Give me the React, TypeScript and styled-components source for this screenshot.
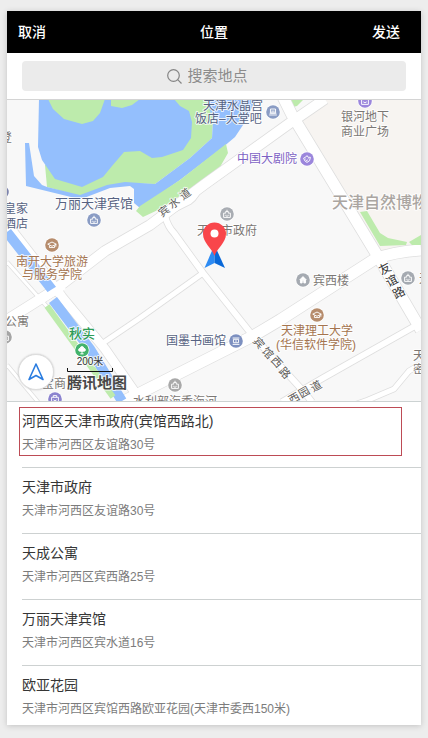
import React from 'react';
import styled, { createGlobalStyle } from 'styled-components';

const GlobalStyle = createGlobalStyle`
  * {
    box-sizing: border-box;
  }
  body {
    margin: 0;
    background: #ededed;
    font-family: "Liberation Sans", "Noto Sans CJK SC", sans-serif;
  }
  button,
  input {
    font-family: inherit;
  }
`;

const Screen = styled.main`
  margin: 11px 7px 13px;
  background: #fff;
  box-shadow: 0 1px 6px rgba(0, 0, 0, 0.18);
`;

const TopBar = styled.header`
  display: grid;
  grid-template-columns: 1fr auto 1fr;
  align-items: center;
  height: 42px;
  padding: 0 21px 0 11px;
  background: #000;
`;

const BarButton = styled.button<{ $end?: boolean }>`
  justify-self: ${(p) => (p.$end ? 'end' : 'start')};
  padding: 0;
  border: 0;
  background: none;
  color: #fff;
  font-size: 14px;
  line-height: 20px;
  font-weight: 500;
`;

const Title = styled.h1`
  margin: 0 0 0 10px;
  color: #fff;
  font-size: 14px;
  line-height: 20px;
  font-weight: 500;
`;

const SearchBar = styled.form`
  padding: 8px 15px;
  border-bottom: 1px solid #d4d4d4;
`;

const SearchField = styled.label`
  display: flex;
  align-items: center;
  justify-content: center;
  gap: 6px;
  height: 30px;
  border-radius: 4px;
  background: #ebebeb;
`;

const SearchInput = styled.input`
  width: 74px;
  padding: 0;
  border: 0;
  outline: 0;
  background: transparent;
  color: #444;
  font-size: 15px;
  line-height: 22px;
  &::placeholder {
    color: #8c8c8c;
    opacity: 1;
  }
`;

const MapPane = styled.section`
  position: relative;
  height: 302px;
  border-bottom: 1px solid #ccd2d2;
  overflow: hidden;
`;

const MapCanvas = styled.svg`
  display: block;
  width: 100%;
  height: 100%;
`;

const MapText = styled.text<{ $size?: number; $weight?: number }>`
  font-size: ${(p) => p.$size ?? 12}px;
  font-weight: ${(p) => p.$weight ?? 400};
  paint-order: stroke;
  stroke: rgba(255, 255, 255, 0.8);
  stroke-width: 2px;
  stroke-linejoin: round;
`;

const LocateButton = styled.button`
  position: absolute;
  left: 11px;
  bottom: 11px;
  display: flex;
  align-items: center;
  justify-content: center;
  width: 36px;
  height: 36px;
  padding: 0;
  border: 1px solid #ddd;
  border-radius: 50%;
  background: #fff;
  box-shadow: 0 0 2px rgba(0, 0, 0, 0.2);
`;

const PlaceList = styled.ul`
  margin: 0;
  padding: 0 0 0 15px;
  list-style: none;
`;

const PlaceButton = styled.button`
  display: flex;
  flex-direction: column;
  gap: 3px;
  width: 100%;
  padding: 8px 15px 12px 0;
  border: 0;
  background: none;
  text-align: left;
`;

const PlaceItem = styled.li<{ $selected?: boolean }>`
  position: relative;
  border-bottom: 1px solid #cdd1d1;
  &:last-child {
    border-bottom: 0;
  }
  &:last-child ${PlaceButton} {
    padding-bottom: 6px;
  }
  &::after {
    content: '';
    display: ${(p) => (p.$selected ? 'block' : 'none')};
    position: absolute;
    inset: 5px 19px 11px -3px;
    border: 1px solid #bd4b55;
    pointer-events: none;
  }
`;

const PlaceName = styled.span`
  color: #363636;
  font-size: 14px;
  line-height: 22px;
`;

const PlaceAddress = styled.span`
  color: #7c7c7c;
  font-size: 12px;
  line-height: 20px;
`;

type Glyph = 'tower' | 'bed' | 'home' | 'cap' | 'bag' | 'tree' | 'mask' | 'frame';

const glyphs: Record<Glyph, React.ReactNode> = {
  tower: <path d="M-4 4V-1h2.500V-3h3v2H4v5ZM0-5v2M-2 1v1M0 1v3M2 1v1" />,
  bed: <path d="M-3-3.500h6V1h-6ZM-4.500 3.500h9M-2-1h4M-4 1.500h8" />,
  home: <path d="M-4 0 0-4 4 0M-3-.5V3.500h2V1h2v2.500h2V-.5Z" fill="#fff" />,
  cap: <path d="M-5-1 0-3.500 5-1 0 1.500ZM-3 .5V3h6V.5M4.500-1v3" />,
  bag: <path d="M-4-2h8v6h-8ZM-2-2v-2h4v2M-2 1q2 2 4 0" />,
  tree: <path d="M-4 0q0-2 2-2 0-2 2-2t2 2q2 0 2 2 0 1.500-2 1.500h-4Q-4 1.500-4 0M0 1v4M-2 4.500h4" fill="#fff" />,
  mask: <path d="M-4-1q3-1 4-3 1 3 4 2Q4 3 0 4-3 3-4-1M-2 0h1M1-1h1M-1 2 1 1" />,
  frame: <path d="M-4-3.500h8M-3-2h6v4h-6ZM-4 4h8M-1 0h2" />,
};

function Poi({ x, y, color, glyph }: { x: number; y: number; color: string; glyph: Glyph }) {
  return (
    <g transform={`translate(${x} ${y})`}>
      <circle r="7.500" fill="#fff" />
      <circle r="6.800" fill={color} />
      <g fill="none" stroke="#fff" strokeWidth="1.100" transform="scale(.85)">
        {glyphs[glyph]}
      </g>
    </g>
  );
}

const roads = [
  { d: 'M7 365 38 402', w: 3 },
  { d: 'M7 262 50 310', w: 3 },
  { d: 'M103 343 140 318 203 273', w: 5 },
  { d: 'M165 216Q168 227 174 233L203 273 253 336 305 393 312 402', w: 6 },
  { d: 'M166 214 190 202Q198 196 201 184', w: 4 },
  { d: 'M282 402 323 378 415 326', w: 6 },
  { d: 'M354 405 368 400 394 389 409 371 421 364', w: 5 },
  { d: 'M7 320 53 291 105 251 150 225 205 184 290 123 325 99', w: 10 },
  { d: 'M118 404 140 393 253 336 280 320 375 259Q393 252 421 250', w: 11 },
  { d: 'M283 97 292 115 377 255 421 330', w: 11 },
  { d: 'M7 224 35 260 62 297 105 349 143 404', w: 9 },
];

const BLUE = '#94bffd';
const GREEN = '#bdebac';

function CityMap() {
  return (
    <MapCanvas viewBox="7 100 414 301" preserveAspectRatio="xMidYMid slice" role="img" aria-label="地图">
      <path d="M7 99h414v303H7Z" fill="#f8f8f8" />
      <path d="M292 115 325 97h96v150l-42 5Z" fill="#f7f4f1" />

      <path
        d="M45 165 104 150 174 99H207L213 120 212 138 190 158 155 184 125 183 107 186 80 196 47 187Z"
        fill={GREEN}
      />
      <path
        d="M39 99 38 147 42 160 55 179 82 187 103 177 112 166 124 152 140 151 152 158 162 157 183 150 191 138 192 122 189 111 180 106 174 99Z"
        fill={BLUE}
      />
      <path
        d="M25 143H29L34 176 42 185 47 187 80 195 107 185 125 182 140 183 155 184 190 158 212 138 213 120 206 99H256L245 122 235 137 222 148 180 180 140 208 134 203V189L130 186 110 188 84 198 75 198 26 186Z"
        fill={BLUE}
      />
      <path d="M140 206 180 180 226 144 228 153 220 167 200 183 160 209 143 217 136 211Z" fill={GREEN} />
      <path d="M48 99 53 109 64 119 82 124 93 121 100 113 105 99ZM111 99V106L122 108 132 105 140 99Z" fill={GREEN} />
      <path d="M289 99H304L297 106 293 107Z" fill={GREEN} />

      <g fill="none" strokeLinejoin="round">
        {roads.map((r) => (
          <path key={r.d} d={r.d} stroke="#dedede" strokeWidth={r.w + 1.5} />
        ))}
        {roads.map((r) => (
          <path key={r.d} d={r.d} stroke="#fff" strokeWidth={r.w} />
        ))}
      </g>

      <path d="M7 232 53 291M53 300 90 349 122 401" stroke={BLUE} strokeWidth="10" fill="none" />
      <path d="M43 299 64 286" stroke="#fff" strokeWidth="7" />
      <path d="M47 306 113 397" stroke={GREEN} strokeWidth="6" fill="none" />
      <path d="M360 212 367 211 380 233 388 238 407 242 406 245 380 246ZM409 242 421 235V245H412Z" fill={GREEN} />

      <Poi x={273} y={112} color="#8a9cc4" glyph="bed" />
      <Poi x={365} y={101} color="#9b86dc" glyph="bag" />
      <Poi x={307} y={159} color="#9b86dc" glyph="mask" />
      <Poi x={94} y={220} color="#8a9cc4" glyph="tower" />
      <Poi x={227} y={214} color="#a9adb3" glyph="tower" />
      <Poi x={52} y={245} color="#b68c6c" glyph="cap" />
      <Poi x={303} y={280} color="#a5aab1" glyph="home" />
      <Poi x={408} y={278} color="#a5aab1" glyph="tower" />
      <Poi x={317} y={315} color="#b68c6c" glyph="cap" />
      <Poi x={236} y={341} color="#7d90c0" glyph="frame" />
      <Poi x={175} y={385} color="#a9a9a9" glyph="tower" />
      <Poi x={82} y={350} color="#43b36c" glyph="tree" />
      <Poi x={55} y={399} color="#8b83cf" glyph="bag" />
      <Poi x={2} y={192} color="#7d84ad" glyph="frame" />
      <Poi x={5} y={337} color="#a5a5a5" glyph="tower" />

      <g fill="#566282">
        <MapText x={203} y={110}>天津水晶宫</MapText>
        <MapText x={195} y={123}>饭店–大堂吧</MapText>
        <MapText x={55} y={208} $size={13}>万丽天津宾馆</MapText>
        <MapText x={4} y={213}>皇家</MapText>
        <MapText x={4} y={228}>酒店</MapText>
        <MapText x={166} y={345}>国墨书画馆</MapText>
      </g>
      <g fill="#7d62c4">
        <MapText x={237} y={163}>中国大剧院</MapText>
      </g>
      <g fill="#7b7774">
        <MapText x={0} y={142}>登</MapText>
        <MapText x={341} y={121}>银河地下</MapText>
        <MapText x={341} y={136}>商业广场</MapText>
        <MapText x={197} y={235}>天津市政府</MapText>
        <MapText x={313} y={285}>宾西楼</MapText>
        <MapText x={419} y={283}>天</MapText>
        <MapText x={5} y={326}>公寓</MapText>
        <MapText x={42} y={388}>宝商</MapText>
        <MapText x={133} y={406}>水利部海委海河</MapText>
        <MapText x={413} y={360}>天</MapText>
        <MapText x={413} y={374}>密</MapText>
      </g>
      <g fill="#aaa5a1">
        <MapText x={332} y={208} $size={16} $weight={500}>天津自然博物</MapText>
      </g>
      <g fill="#a4744f">
        <MapText x={16} y={266}>南开大学旅游</MapText>
        <MapText x={22} y={279}>与服务学院</MapText>
        <MapText x={281} y={335}>天津理工大学</MapText>
        <MapText x={276} y={349}>(华信软件学院)</MapText>
      </g>
      <g fill="#2f9c56">
        <MapText x={69} y={338} $size={13} $weight={500}>秋实</MapText>
      </g>
      <g fill="#5d5b58" textAnchor="middle">
        <MapText transform="translate(164 211) rotate(-37)" y={4} $size={11}>宾</MapText>
        <MapText transform="translate(174 203) rotate(-37)" y={4} $size={11}>水</MapText>
        <MapText transform="translate(185 194) rotate(-37)" y={4} $size={11}>道</MapText>
        <MapText transform="translate(259 343) rotate(48)" y={4} $size={11}>宾</MapText>
        <MapText transform="translate(268 353) rotate(48)" y={4} $size={11}>馆</MapText>
        <MapText transform="translate(277 362) rotate(48)" y={4} $size={11}>西</MapText>
        <MapText transform="translate(285 373) rotate(48)" y={4} $size={11}>路</MapText>
        <MapText transform="translate(294 398) rotate(-30)" y={4} $size={11}>西</MapText>
        <MapText transform="translate(304 392) rotate(-30)" y={4} $size={11}>园</MapText>
        <MapText transform="translate(316 386) rotate(-30)" y={4} $size={11}>道</MapText>
      </g>
      <g fill="#333" textAnchor="middle">
        <MapText transform="translate(385 269) rotate(-28)" y={4}>友</MapText>
        <MapText transform="translate(392 281) rotate(-28)" y={4}>谊</MapText>
        <MapText transform="translate(399 293) rotate(-28)" y={4}>路</MapText>
      </g>

      <path d="M214.500 245 204.500 268 214.500 263Z" fill="#2d8bf3" />
      <path d="M214.500 245 225 268 214.500 263Z" fill="#0968d8" />
      <path d="M214.500 256C212 248 203 243 203 234a11.500 11.500 0 0 1 23 0c0 9-9 14-11.500 22Z" fill="#f9464b" />
      <circle cx="214.500" cy="233.500" r="4" fill="#fff" />

      <g fill="#333" textAnchor="middle">
        <MapText x={90} y={365} $size={10}>200米</MapText>
      </g>
      <path d="M67.500 368v3.500h45V368" fill="none" stroke="#111" />
      <g fill="#484848">
        <MapText x={67} y={388} $size={15} $weight={700}>腾讯地图</MapText>
      </g>
    </MapCanvas>
  );
}

const places = [
  { name: '河西区天津市政府(宾馆西路北)', address: '天津市河西区友谊路30号', selected: true },
  { name: '天津市政府', address: '天津市河西区友谊路30号' },
  { name: '天成公寓', address: '天津市河西区宾西路25号' },
  { name: '万丽天津宾馆', address: '天津市河西区宾水道16号' },
  { name: '欧亚花园', address: '天津市河西区宾馆西路欧亚花园(天津市委西150米)' },
];

export default function App() {
  return (
    <>
      <GlobalStyle />
      <Screen lang="zh-CN">
        <TopBar>
          <BarButton type="button">取消</BarButton>
          <Title>位置</Title>
          <BarButton type="button" $end>
            发送
          </BarButton>
        </TopBar>
        <SearchBar onSubmit={(e) => e.preventDefault()}>
          <SearchField>
            <svg width="15" height="15" viewBox="0 0 15 15" fill="none" stroke="#858585" strokeWidth="1.200" aria-hidden="true">
              <circle cx="6.500" cy="6.500" r="5.800" />
              <path d="m10.700 10.700 3.800 3.800" />
            </svg>
            <SearchInput type="text" placeholder="搜索地点" aria-label="搜索地点" />
          </SearchField>
        </SearchBar>
        <MapPane>
          <CityMap />
          <LocateButton type="button" aria-label="定位">
            <svg width="18" height="18" viewBox="0 0 18 18" fill="none" stroke="#2b7de0" strokeWidth="1.600" strokeLinejoin="round" aria-hidden="true">
              <path d="M9 1 2 16.500 9 12.500 16 16.500Z" />
            </svg>
          </LocateButton>
        </MapPane>
        <PlaceList>
          {places.map((p) => (
            <PlaceItem key={p.name} $selected={p.selected}>
              <PlaceButton type="button">
                <PlaceName>{p.name}</PlaceName>
                <PlaceAddress>{p.address}</PlaceAddress>
              </PlaceButton>
            </PlaceItem>
          ))}
        </PlaceList>
      </Screen>
    </>
  );
}
